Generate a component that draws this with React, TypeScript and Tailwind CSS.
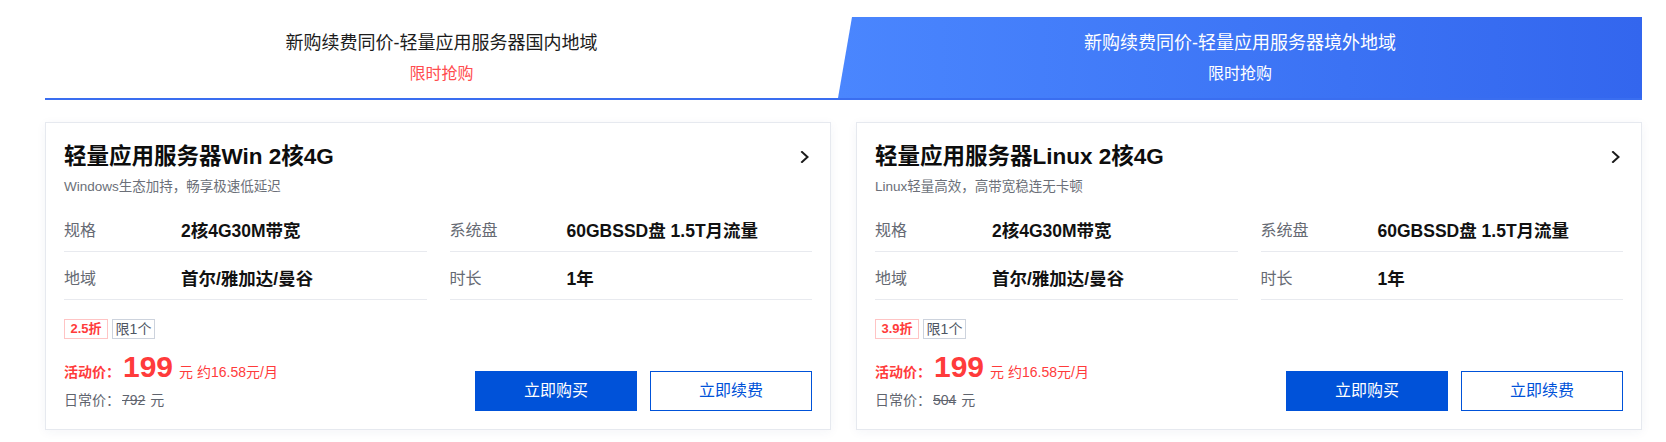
import React from "react";

const FONT = '"Liberation Sans", "Noto Sans CJK SC", sans-serif';

type Card = {
  title: string;
  sub: string;
  discount: string;
  regular: string;
};

const cards: Card[] = [
  {
    title: "轻量应用服务器Win 2核4G",
    sub: "Windows生态加持，畅享极速低延迟",
    discount: "2.5折",
    regular: "792",
  },
  {
    title: "轻量应用服务器Linux 2核4G",
    sub: "Linux轻量高效，高带宽稳连无卡顿",
    discount: "3.9折",
    regular: "504",
  },
];

function Chevron() {
  return (
    <svg width="10" height="12" viewBox="0 0 10 12" className="mr-[2px] shrink-0">
      <path d="M2 1 L7.5 6 L2 11" fill="none" stroke="#1a1a1a" strokeWidth="2" strokeLinecap="square" />
    </svg>
  );
}

function SpecCell({ label, value }: { label: string; value: string }) {
  return (
    <div className="flex items-center border-b border-[#e8eaef] pt-[15px] pb-[8px] leading-[24px]">
      <div className="w-[117px] shrink-0 text-[16px] text-[#666a73]">{label}</div>
      <div className="text-[17.5px] font-bold text-[#111]">{value}</div>
    </div>
  );
}

function ProductCard({ c }: { c: Card }) {
  return (
    <div className="border border-[#e6e9ef] bg-white px-[18px] pt-[19px] pb-[19px] shadow-[0_2px_10px_rgba(40,60,110,0.05)]">
      <div className="flex items-center justify-between">
        <div className="text-[22.5px] font-bold leading-[30px] text-[#0d0d0d]">{c.title}</div>
        <Chevron />
      </div>
      <div className="mt-[5px] text-[13.5px] leading-[20px] text-[#6b6f78]">{c.sub}</div>
      <div className="mt-[7px] grid grid-cols-2 gap-x-[23px]">
        <SpecCell label="规格" value="2核4G30M带宽" />
        <SpecCell label="系统盘" value="60GBSSD盘 1.5T月流量" />
        <SpecCell label="地域" value="首尔/雅加达/曼谷" />
        <SpecCell label="时长" value="1年" />
      </div>
      <div className="mt-[19px] flex gap-[4px]">
        <span className="flex h-[20px] w-[44px] items-center justify-center border border-[#ffc4c4] text-[13px] font-bold text-[#ff3b3b]">
          {c.discount}
        </span>
        <span className="flex h-[20px] w-[43px] items-center justify-center border border-[#cdd3dd] text-[14px] text-[#4e5562]">
          限1个
        </span>
      </div>
      <div className="flex items-end justify-between">
        <div>
          <div className="mt-[13px] flex h-[30px] items-baseline text-[#ff3b3b]">
            <span className="text-[14px] font-bold leading-[16px]">活动价：</span>
            <span className="ml-[3px] text-[30px] font-bold leading-[30px]">199</span>
            <span className="ml-[6px] text-[14px] leading-[16px]">元 约16.58元/月</span>
          </div>
          <div className="mt-[8px] flex items-baseline text-[14px] leading-[20px] text-[#5f646e]">
            <span>日常价：</span>
            <span className="ml-[2px] line-through">{c.regular}</span>
            <span className="ml-[5px]">元</span>
          </div>
        </div>
        <div className="mb-[-1px] flex gap-[13px]">
          <button className="h-[40px] w-[162px] bg-[#0052d9] text-[16px] text-white">立即购买</button>
          <button className="h-[40px] w-[162px] border border-[#0052d9] bg-white text-[16px] text-[#0052d9]">
            立即续费
          </button>
        </div>
      </div>
    </div>
  );
}

export default function App() {
  return (
    <div className="min-h-[442px] w-[1666px] bg-white" style={{ fontFamily: FONT }}>
      <div className="pl-[45px] pr-[24px] pt-[17px]">
        <div className="flex border-b-2 border-[#3a6ef0]">
          <div className="flex h-[81px] w-[793px] shrink-0 flex-col items-center pt-[13px]">
            <div className="text-[18px] leading-[26px] text-[#1c1c1c]">新购续费同价-轻量应用服务器国内地域</div>
            <div className="mt-[7px] text-[16px] leading-[22px] text-[#ff4d4f]">限时抢购</div>
          </div>
          <div className="flex h-[81px] flex-1 flex-col items-center bg-gradient-to-r from-[#4a86fe] to-[#3366ee] pt-[13px] [clip-path:polygon(14px_0,100%_0,100%_100%,0_100%)]">
            <div className="text-[18px] leading-[26px] text-white">新购续费同价-轻量应用服务器境外地域</div>
            <div className="mt-[7px] text-[16px] leading-[22px] text-white">限时抢购</div>
          </div>
        </div>
        <div className="mt-[22px] grid grid-cols-2 gap-[25px]">
          {cards.map((c) => (
            <ProductCard key={c.title} c={c} />
          ))}
        </div>
      </div>
    </div>
  );
}
